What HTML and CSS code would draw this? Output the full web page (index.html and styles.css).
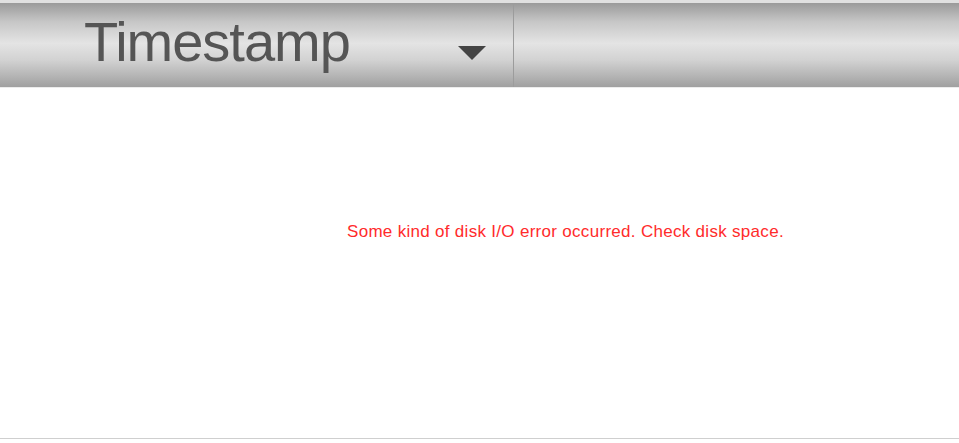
FILE: index.html
```html
<!DOCTYPE html>
<html lang="en">
    <head>
        <meta charset="UTF-8"/>
        <meta name="viewport" content="width=device-width, initial-scale=1.0"/>
        <title>Timestamp</title>
        <link rel="stylesheet" href="styles.css">
    </head>
    <body>
        <div class="top-strip"></div>
        <header class="toolbar">
            <div class="column-head">
                <span class="column-title">Timestamp</span>
                <span class="sort-arrow"></span>
            </div>
            <div class="column-rest"></div>
        </header>
        <main class="content">
            <p class="error">Some kind of disk I/O error occurred. Check disk space.</p>
        </main>
    </body>
</html>
```

FILE: styles.css
```css
body {
    margin: 0;
    font-family: "Liberation Sans", Arial, sans-serif;
    background: #fff;
}

.top-strip {
    height: 3px;
    background: #e0e0e0;
}

.toolbar {
    display: flex;
    height: 84px;
    background: linear-gradient(#9a9a9a, #c6c6c6 22%, #e4e4e4 48%, #d2d2d2 68%, #a0a0a0);
    border-bottom: 1px solid #ececec;
}

.column-head {
    display: flex;
    align-items: center;
    width: 514px;
    padding-left: 84px;
    box-sizing: border-box;
    border-right: 1px solid #9c9c9c;
}

.column-title {
    font-size: 56px;
    letter-spacing: -1px;
    color: #555;
    line-height: 1;
    margin-top: -6px;
}

.sort-arrow {
    margin-left: auto;
    margin-right: 27px;
    margin-top: 16px;
    width: 0;
    height: 0;
    border-left: 14px solid transparent;
    border-right: 14px solid transparent;
    border-top: 14px solid #444;
}

.column-rest {
    flex: 1;
}

.content {
    height: 351px;
    border-bottom: 1px solid #cfcfcf;
    box-sizing: border-box;
    padding-top: 134px;
    padding-left: 347px;
}

.error {
    margin: 0;
    font-size: 17px;
    letter-spacing: 0.3px;
    color: #ff2b2b;
}
```
